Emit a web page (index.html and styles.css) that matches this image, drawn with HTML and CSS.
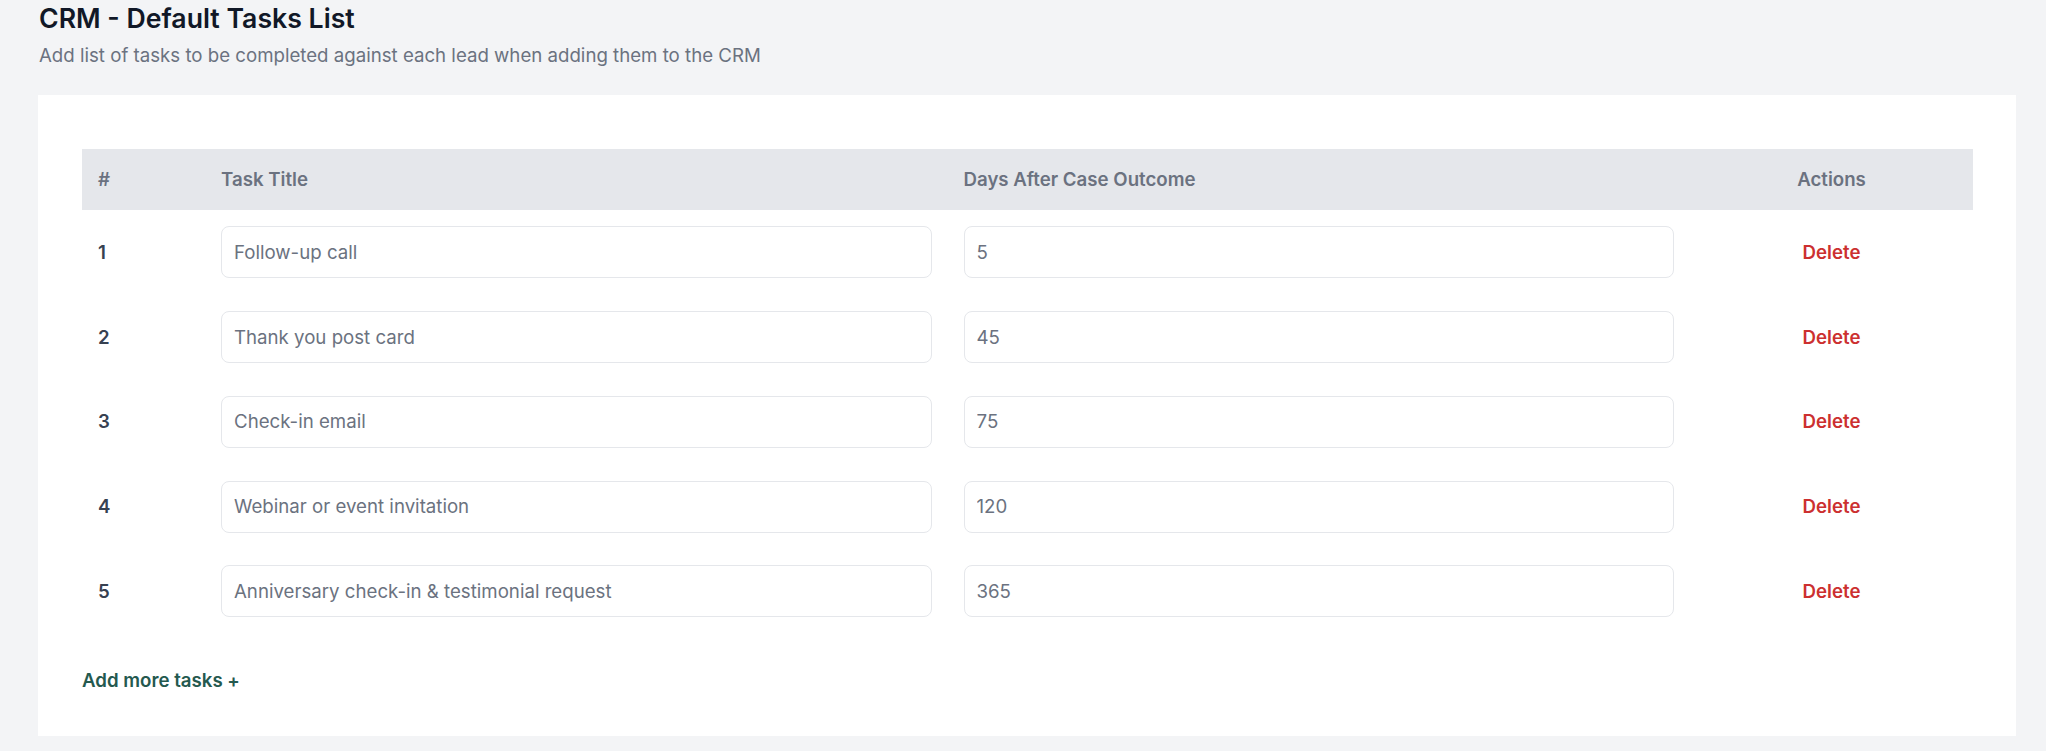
FILE: index.html
```html
<!DOCTYPE html>
<html lang="en">
<head>
<meta charset="utf-8">
<title>CRM - Default Tasks List</title>
<link rel="stylesheet" href="styles.css">
</head>
<body>
<div class="page">
  <header class="page-head">
    <h1 class="title">CRM - Default Tasks List</h1>
    <p class="subtitle">Add list of tasks to be completed against each lead when adding them to the CRM</p>
  </header>
  <section class="card">
    <div class="table">
      <div class="thead">
        <div class="th">#</div>
        <div class="th">Task Title</div>
        <div class="th">Days After Case Outcome</div>
        <div class="th th-center">Actions</div>
      </div>
      <div class="tr">
        <div class="td num">1</div>
        <div class="td"><input class="field" type="text" value="Follow-up call"></div>
        <div class="td"><input class="field" type="text" value="5"></div>
        <div class="td td-center"><button class="delete">Delete</button></div>
      </div>
      <div class="tr">
        <div class="td num">2</div>
        <div class="td"><input class="field" type="text" value="Thank you post card"></div>
        <div class="td"><input class="field" type="text" value="45"></div>
        <div class="td td-center"><button class="delete">Delete</button></div>
      </div>
      <div class="tr">
        <div class="td num">3</div>
        <div class="td"><input class="field" type="text" value="Check-in email"></div>
        <div class="td"><input class="field" type="text" value="75"></div>
        <div class="td td-center"><button class="delete">Delete</button></div>
      </div>
      <div class="tr">
        <div class="td num">4</div>
        <div class="td"><input class="field" type="text" value="Webinar or event invitation"></div>
        <div class="td"><input class="field" type="text" value="120"></div>
        <div class="td td-center"><button class="delete">Delete</button></div>
      </div>
      <div class="tr">
        <div class="td num">5</div>
        <div class="td"><input class="field" type="text" value="Anniversary check-in &amp; testimonial request"></div>
        <div class="td"><input class="field" type="text" value="365"></div>
        <div class="td td-center"><button class="delete">Delete</button></div>
      </div>
    </div>
    <button class="add-more">Add more tasks +</button>
  </section>
</div>
</body>
</html>
```
FILE: styles.css
```css
* { box-sizing: border-box; }
html, body { margin: 0; padding: 0; }
body {
  background: #f3f4f6;
  font-family: Inter, "Noto Sans", sans-serif;
  color: #111827;
  width: 2046px;
  height: 751px;
  overflow: hidden;
}
.page {
  padding: 0 30px 15px 38px;
}
.page-head {
  padding-left: 1px;
  height: 95px;
}
.title {
  margin: 0;
  padding-top: 2px;
  font-size: 26.67px;
  line-height: 32px;
  font-weight: 600;
  color: #111827;
}
.subtitle {
  margin: 9px 0 0;
  font-size: 18.67px;
  line-height: 26px;
  color: #6b7280;
}
.card {
  background: #ffffff;
  padding: 54px 43px 44px 44px;
  height: 641px;
}
.table {
  display: flex;
  flex-direction: column;
}
.thead, .tr {
  display: grid;
  grid-template-columns: 123px 1fr 1fr 283px;
}
.thead {
  background: #e5e7eb;
  height: 61px;
  align-items: center;
}
.th {
  padding: 0 16px;
  font-size: 18.67px;
  font-weight: 600;
  color: #6b7280;
}
.th-center, .td-center { text-align: center; }
.tr {
  height: 84.75px;
  align-items: center;
}
.td {
  padding: 0 16px;
}
.num {
  font-size: 18.67px;
  font-weight: 600;
  color: #374151;
}
.field {
  display: block;
  width: 100%;
  height: 52px;
  border: 1.5px solid #e5e7eb;
  border-radius: 8px;
  padding: 0 12px;
  font-family: Inter, "Noto Sans", sans-serif;
  font-size: 18.67px;
  color: #6b7280;
  background: #fff;
  outline: none;
}
.delete {
  border: 0;
  background: none;
  padding: 0;
  font-family: Inter, "Noto Sans", sans-serif;
  font-size: 18.67px;
  font-weight: 600;
  color: #cc3030;
  cursor: pointer;
}
.add-more {
  display: block;
  margin-top: 35px;
  border: 0;
  background: none;
  padding: 0;
  font-family: Inter, "Noto Sans", sans-serif;
  font-size: 18.67px;
  line-height: 24px;
  font-weight: 600;
  color: #24594f;
  cursor: pointer;
}
```
